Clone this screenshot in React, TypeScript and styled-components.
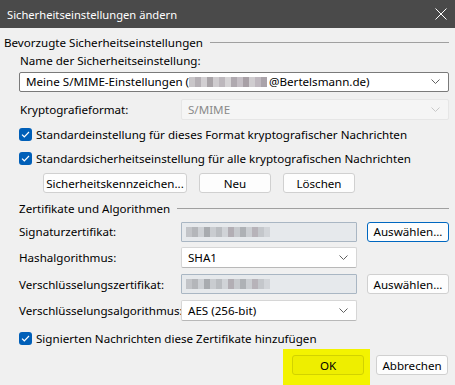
import React from 'react';
import styled, {createGlobalStyle} from 'styled-components';

const GlobalStyle = createGlobalStyle`
  html, body {
    margin: 0;
    padding: 0;
    background: #f0f0f0;
  }
  body {
    font-family: 'Noto Sans', 'Liberation Sans', sans-serif;
    font-size: 11.6px;
    color: #000;
  }
`;

const Window = styled.div`
  width: 455px;
  height: 385px;
  display: flex;
  flex-direction: column;
  background: #f0f0f0;
  overflow: hidden;
`;

const TitleBar = styled.div`
  height: 28px;
  flex: none;
  display: flex;
  align-items: center;
  justify-content: space-between;
  padding: 0 8px 0 7px;
  background: #4a4a4a;
  color: #fff;
  font-size: 11.2px;
`;

const CloseIcon = styled.svg`
  width: 12px;
  height: 12px;
`;

const GroupHeader = styled.div<{$indent: number; $top: number}>`
  display: flex;
  align-items: center;
  gap: 7px;
  height: 16px;
  margin-top: ${p => p.$top}px;
  padding-left: ${p => p.$indent}px;
  padding-right: 6px;

  &::after {
    content: '';
    flex: 1;
    height: 1px;
    background: #a0a0a0;
  }
`;

const Label = styled.div`
  white-space: nowrap;
`;

const StackLabel = styled(Label)<{$top: number}>`
  height: 16px;
  line-height: 16px;
  margin: ${p => p.$top}px 0 0 20px;
`;

const Combo = styled.div<{$disabled?: boolean; $focused?: boolean}>`
  box-sizing: border-box;
  height: 21px;
  display: flex;
  align-items: center;
  justify-content: space-between;
  padding: 0 8px 0 6px;
  background: ${p => (p.$disabled ? '#f5f5f5' : '#fff')};
  border: 1px solid ${p => (p.$focused ? '#7a7a7a' : p.$disabled ? '#e6e6e6' : '#d6d6d6')};
  border-bottom-color: ${p => (p.$focused ? '#7a7a7a' : p.$disabled ? '#e6e6e6' : '#b8b8b8')};
  border-radius: 2px;
  color: ${p => (p.$disabled ? '#8a8a8a' : '#000')};
  white-space: nowrap;
`;

const WideCombo = styled(Combo)`
  margin: 3px 6px 0 19px;
`;

const Chevron = styled.svg<{$muted?: boolean}>`
  width: 9px;
  height: 5px;
  flex: none;
  stroke: ${p => (p.$muted ? '#c8c8c8' : '#606060')};
`;

const FormatRow = styled.div`
  display: grid;
  grid-template-columns: 161px 1fr;
  align-items: center;
  margin: 7px 6px 0 20px;
`;

const CheckRow = styled.div<{$top: number}>`
  display: flex;
  align-items: center;
  gap: 4px;
  height: 16px;
  margin: ${p => p.$top}px 0 0 19px;
`;

const CheckBox = styled.span`
  width: 13px;
  height: 13px;
  flex: none;
  border-radius: 3px;
  background: #005fb8;
  display: flex;
  align-items: center;
  justify-content: center;
`;

const ButtonRow = styled.div`
  display: flex;
  gap: 12px;
  margin: 7px 0 0 43px;
`;

const Button = styled.button<{$width: number; $accent?: boolean; $yellow?: boolean}>`
  box-sizing: border-box;
  width: ${p => p.$width}px;
  height: 20px;
  padding: 0;
  font: inherit;
  color: #000;
  white-space: nowrap;
  background: ${p => (p.$yellow ? '#eeee00' : '#fdfdfd')};
  border: 1px solid ${p => (p.$accent ? '#0067c0' : p.$yellow ? '#d2d200' : '#d0d0d0')};
  border-radius: 3px;
`;

const FieldRow = styled.div<{$top: number}>`
  display: grid;
  grid-template-columns: 162px 176px 92px;
  align-items: center;
  justify-items: start;
  height: 21px;
  margin: ${p => p.$top}px 0 0 19px;

  & > *:nth-child(2) {
    justify-self: stretch;
  }
  & > *:nth-child(3) {
    justify-self: end;
  }
`;

const CertField = styled.div`
  box-sizing: border-box;
  height: 20px;
  display: flex;
  align-items: center;
  padding-left: 4px;
  background: #e6e9ec;
  border: 1px solid #a9b6c3;
  border-radius: 1px;
`;

const Mosaic = styled.div`
  display: flex;
  height: 10px;
`;

const Tile = styled.span<{$c: string}>`
  width: 6px;
  height: 10px;
  background: ${p => p.$c};
`;

const NameText = styled.span`
  display: flex;
  align-items: center;
`;

const Footer = styled.div`
  display: flex;
  align-items: flex-start;
  justify-content: flex-end;
  gap: 6px;
  margin-top: 3px;
  padding-right: 7px;
  flex: 1;
`;

const Highlight = styled.div`
  display: flex;
  padding: 6px 6px 10px 9px;
  background: #f3f300;
`;

const FooterButtonWrap = styled.div`
  padding-top: 6px;
`;

const BlurName = styled(Mosaic)`
  margin: 0 2px 0 0;
`;

const nameTiles = ['#c9c6c9', '#b5b0b5', '#d2cfd2', '#a9a4a8', '#cfcccf', '#bdb8bd', '#d6d4d6', '#b0aab0', '#c5bfc5', '#a8a0a6', '#d0cdd0', '#bfb8bf', '#aaa3aa'];
const certTiles = ['#c2c4c8', '#b4b6ba', '#cdd0d4', '#a8abaf', '#c9ccd0', '#babdc1', '#d0d3d7', '#b2aeb4', '#c6c9cd', '#aeb1b5', '#cbced2', '#b7b3b9', '#c4c7cb', '#d2d5d9'];

function ChevronIcon({muted}: {muted?: boolean}) {
  return (
    <Chevron $muted={muted} viewBox="0 0 9 5" fill="none" strokeWidth="1">
      <path d="M0.5 0.5l4 4 4-4" />
    </Chevron>
  );
}

function Check({label, top}: {label: string; top: number}) {
  return (
    <CheckRow $top={top}>
      <CheckBox>
        <svg width="9" height="7" viewBox="0 0 9 7" fill="none" stroke="#fff" strokeWidth="1.2">
          <path d="M1 3.6l2.3 2.2L8 1" />
        </svg>
      </CheckBox>
      <Label>{label}</Label>
    </CheckRow>
  );
}

function Blur({tiles}: {tiles: string[]}) {
  return (
    <Mosaic>
      {tiles.map((c, i) => (
        <Tile key={i} $c={c} />
      ))}
    </Mosaic>
  );
}

export default function App() {
  return (
    <>
      <GlobalStyle />
      <Window>
        <TitleBar>
          <span>Sicherheitseinstellungen ändern</span>
          <CloseIcon viewBox="0 0 12 12" fill="none" stroke="#fff" strokeWidth="1">
            <path d="M0.5 0.5l11 11M11.5 0.5l-11 11" />
          </CloseIcon>
        </TitleBar>

        <GroupHeader $indent={4} $top={7}>
          <Label>Bevorzugte Sicherheitseinstellungen</Label>
        </GroupHeader>
        <StackLabel $top={2}>Name der Sicherheitseinstellung:</StackLabel>
        <WideCombo $focused>
          <NameText>
            Meine S/MIME-Einstellungen (
            <BlurName>
              {nameTiles.map((c, i) => (
                <Tile key={i} $c={c} />
              ))}
            </BlurName>
            @Bertelsmann.de)
          </NameText>
          <ChevronIcon />
        </WideCombo>

        <FormatRow>
          <Label>Kryptografieformat:</Label>
          <Combo $disabled>
            <span>S/MIME</span>
            <ChevronIcon muted />
          </Combo>
        </FormatRow>

        <Check top={7} label="Standardeinstellung für dieses Format kryptografischer Nachrichten" />
        <Check top={8} label="Standardsicherheitseinstellung für alle kryptografischen Nachrichten" />

        <ButtonRow>
          <Button $width={144}>Sicherheitskennzeichen...</Button>
          <Button $width={72}>Neu</Button>
          <Button $width={72}>Löschen</Button>
        </ButtonRow>

        <GroupHeader $indent={19} $top={8}>
          <Label>Zertifikate und Algorithmen</Label>
        </GroupHeader>

        <FieldRow $top={5}>
          <Label>Signaturzertifikat:</Label>
          <CertField>
            <Blur tiles={certTiles} />
          </CertField>
          <Button $width={82} $accent>
            Auswählen...
          </Button>
        </FieldRow>
        <FieldRow $top={5}>
          <Label>Hashalgorithmus:</Label>
          <Combo>
            <span>SHA1</span>
            <ChevronIcon />
          </Combo>
        </FieldRow>
        <FieldRow $top={6}>
          <Label>Verschlüsselungszertifikat:</Label>
          <CertField>
            <Blur tiles={certTiles} />
          </CertField>
          <Button $width={82}>Auswählen...</Button>
        </FieldRow>
        <FieldRow $top={6}>
          <Label>Verschlüsselungsalgorithmus:</Label>
          <Combo>
            <span>AES (256-bit)</span>
            <ChevronIcon />
          </Combo>
        </FieldRow>

        <Check top={9} label="Signierten Nachrichten diese Zertifikate hinzufügen" />

        <Footer>
          <Highlight>
            <Button $width={72} $yellow>
              OK
            </Button>
          </Highlight>
          <FooterButtonWrap>
            <Button $width={72}>Abbrechen</Button>
          </FooterButtonWrap>
        </Footer>
      </Window>
    </>
  );
}
